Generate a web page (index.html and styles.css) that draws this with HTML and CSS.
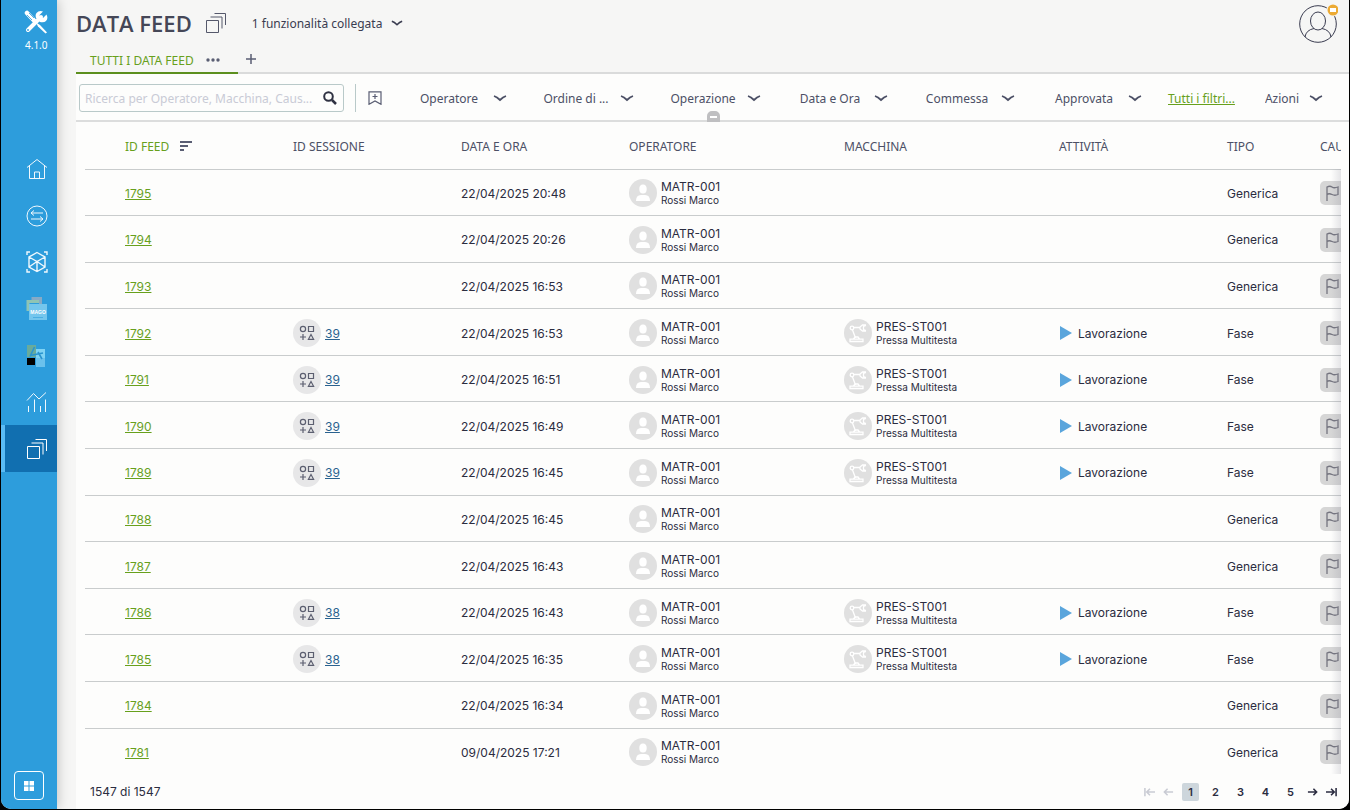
FILE: index.html
```
<!DOCTYPE html>
<html lang="it">
<head>
    <meta charset="UTF-8">
    <meta name="viewport" content="width=device-width, initial-scale=1.0">
    <title>Data Feed</title>
    <link rel="stylesheet" href="styles.css">
</head>
<body>
    <!-- Icone condivise -->
    <svg class="sprite" aria-hidden="true">
        <symbol id="chevron" viewBox="0 0 14 14"><path d="M1 5q3 1 6 4q3-3 6-4" fill="none" stroke="currentColor" stroke-width="1.800"/></symbol>
        <symbol id="stack" viewBox="0 0 22 22"><path d="M1.500 8.500h12v12h-12zM5.500 5h11.500V16.500M9.500 1.500h11V13" fill="none" stroke="currentColor"/></symbol>
        <symbol id="user" viewBox="0 0 28 28"><circle cx="14" cy="14" r="14" fill="#e0e0e0"/><ellipse cx="14" cy="10" rx="3.700" ry="4.500" fill="#fff"/><path d="M7 22q0-6 5-6h4q5 0 5 6z" fill="#fff"/></symbol>
        <symbol id="session" viewBox="0 0 28 28"><circle cx="14" cy="14" r="14" fill="#e7e7e8"/><g fill="none" stroke="#5c5f70" stroke-width="1.200"><circle cx="10" cy="10" r="2.600"/><path d="M15.500 7.500h5v5h-5zM7 18h6M10 15v6M18 15.500l2.600 4.800h-5.200z"/></g></symbol>
        <symbol id="robot" viewBox="0 0 28 28"><circle cx="14" cy="14" r="14" fill="#e0e0e0"/><g fill="none" stroke="#fff" stroke-width="1.300"><circle cx="8" cy="9" r="1.800"/><path d="M10 8.500h6M8.500 11l3 8M22 6h-3.500L16 8v2l2.500 2H22M22 6.500l-2.500 1v3l2.500 1"/><path d="M6 22.500v-2.300h13v2.300zM9.500 20l1.500-2h3l1.500 2"/></g></symbol>
        <symbol id="flag" viewBox="0 0 24 24"><path d="M7 20V6q3-1.500 5 0t6 0v7.500q-3 1.500-6 0t-5 0" fill="none" stroke="#74747f" stroke-width="1.300"/></symbol>
        <symbol id="arrow" viewBox="0 0 12 12"><path d="M1 6h9.500M7 2.500L10.500 6 7 9.500" fill="none" stroke="currentColor" stroke-width="1.700"/></symbol>
        <symbol id="arrow-end" viewBox="0 0 12 12"><path d="M0 6h9M5.500 2.500L9 6 5.500 9.500M11 1.500v9" fill="none" stroke="currentColor" stroke-width="1.700"/></symbol>
    </svg>

    <div class="app">
        <aside class="sidebar">
            <div class="brand">
                <svg width="24" height="24" viewBox="0 0 24 24">
                    <path d="M4 20L17 7" stroke="#fff" stroke-width="4" stroke-linecap="round"/>
                    <path d="M22.500 4.500L19 8l-3-.5L15.500 5 19 1.500q-4-1.500-6.500 1.500-1.500 2-.5 5l4 4q4 1 6-1 2.500-2.500.5-6.500z" fill="#fff"/>
                    <path d="M3 3l7.500 8" stroke="#fff" stroke-width="4.500" stroke-linecap="round"/>
                    <path d="M3 5l5 5M5 3l5 5" stroke="#2d9ddc" stroke-width="0.800"/>
                    <path d="M12 12.500l4 2.500 7 7.500-1.500 1-7.500-7z" fill="#fff"/>
                    <circle cx="4" cy="20" r="0.900" fill="#2d9ddc"/>
                </svg>
                <span>4.1.0</span>
            </div>
            <nav class="menu">
                <a href="#" aria-label="Home">
                    <svg width="22" height="22" viewBox="0 0 22 22"><path d="M1 9.500L11 1.500l10 8M3.500 8v12.500h15V8M8.500 20.500V14h5v6.500"/></svg>
                </a>
                <a href="#" aria-label="Movimenti">
                    <svg width="22" height="22" viewBox="0 0 22 22"><circle cx="11" cy="11" r="10"/><path d="M17 8H5M8 5.500L5 8l3 2.500M5 14h12M14 11.500l3 2.500-3 2.500"/></svg>
                </a>
                <a href="#" aria-label="Articoli">
                    <svg width="22" height="22" viewBox="0 0 22 22" stroke-width="1.400"><path d="M1 4V1h3M18 1h3v3M21 18v3h-3M4 21H1v-3M11 1.500l8 4.500v10l-8 4.500L3 16V6zM3 6l8 4.500L19 6M11 10.500v10M3 16l8-5.500 8 5.500"/></svg>
                </a>
                <a href="#" aria-label="Mago">
                    <svg width="22" height="24" viewBox="0 0 22 24">
                        <path d="M7 4V1.500h7.500V7" stroke="#86aac6" stroke-width="3"/>
                        <path d="M2 14V4.500h11" stroke="#8fc4b4" stroke-width="3"/>
                        <rect x="3" y="7" width="18" height="16" fill="#74c6ed" stroke="none"/>
                        <text x="12" y="17" text-anchor="middle" class="mago">MAGO</text>
                        <path d="M7 20.500h10" stroke="#4aaee2"/>
                    </svg>
                </a>
                <a href="#" aria-label="Analisi">
                    <svg width="22" height="24" viewBox="0 0 22 24" stroke="none">
                        <path d="M1 1h9v12H1z" fill="#69ab9c"/><path d="M10 5h9v9h-9z" fill="#7fd3f4"/><path d="M10 14h9v9h-9z" fill="#6bc1ec"/><path d="M1 14h8v7H1z" fill="#000"/>
                        <path d="M8.500 3L4 12.500M4 11.500l13-2.500M12 8l4 7" fill="none" stroke="#2a94cf" stroke-width="1.600"/>
                    </svg>
                </a>
                <a href="#" aria-label="Statistiche">
                    <svg width="22" height="22" viewBox="0 0 22 22"><path d="M1 9.500l6.500-7L13 8l7-6.500M2.500 21v-6M8.500 21V8.500M14.500 21v-6M19.500 21V8.500"/></svg>
                </a>
                <a href="#" class="active" aria-label="Data feed" aria-current="page">
                    <svg width="22" height="22"><use href="#stack"/></svg>
                </a>
            </nav>
            <button class="apps" aria-label="Applicazioni">
                <svg width="10" height="10" viewBox="0 0 10 10"><path d="M0 0h4.500v4.500H0zM5.500 0H10v4.500H5.500zM0 5.500h4.500V10H0zM5.500 5.500H10V10H5.500z" fill="#fff"/></svg>
            </button>
        </aside>

        <main>
            <header>
                <h1>DATA FEED</h1>
                <svg class="title-icon" width="22" height="22"><use href="#stack"/></svg>
                <div class="dropdown linked">
                    <select aria-label="Funzionalità collegate"><option>1 funzionalità collegata</option></select>
                    <svg width="12" height="12"><use href="#chevron"/></svg>
                </div>
                <button class="profile" aria-label="Profilo">
                    <svg width="40" height="40" viewBox="0 0 40 40">
                        <g fill="none" stroke="#3a3c50"><circle cx="20" cy="21" r="18.300"/><ellipse cx="20" cy="18" rx="7.500" ry="9"/><path d="M7 34q1-7 9-8.500M24 25.500q8 1.500 9 8.500"/></g>
                        <circle cx="35" cy="7" r="6.500" fill="#f6f6f6"/><circle cx="35" cy="7" r="5.500" fill="#ecaa33"/>
                        <rect x="32" y="5" width="6" height="4" fill="#fff"/>
                    </svg>
                </button>
            </header>

            <div class="tabs">
                <button class="tab">TUTTI I DATA FEED
                    <svg width="14" height="4" viewBox="0 0 14 4" fill="#5a5e73"><circle cx="2" cy="2" r="1.700"/><circle cx="7" cy="2" r="1.700"/><circle cx="12" cy="2" r="1.700"/></svg>
                </button>
                <button class="add-tab" aria-label="Aggiungi scheda">
                    <svg width="10" height="10" viewBox="0 0 10 10"><path d="M5 0v10M0 5h10" stroke="#5a5e73" stroke-width="1.500"/></svg>
                </button>
            </div>

            <div class="toolbar">
                <div class="search">
                    <input type="text" aria-label="Ricerca" placeholder="Ricerca per Operatore, Macchina, Caus...">
                    <svg width="14" height="14" viewBox="0 0 14 14"><circle cx="5.500" cy="5.500" r="4.300" fill="none" stroke="#2f3142" stroke-width="2"/><path d="M9 9l4 4" stroke="#2f3142" stroke-width="2.500"/></svg>
                </div>
                <button class="bookmark" aria-label="Salva ricerca">
                    <svg width="14" height="14" viewBox="0 0 14 14"><path d="M1 .8h12v12.500L7 10l-6 3.300zM7 3v5M4.500 5.500h5" fill="none" stroke="#5a5e73" stroke-width="1.200"/></svg>
                </button>
                <div class="filters" id="filters"></div>
                <a class="all-filters" href="#">Tutti i filtri...</a>
                <div class="dropdown actions">
                    <select aria-label="Azioni"><option>Azioni</option></select>
                    <svg width="14" height="14"><use href="#chevron"/></svg>
                </div>
                <button class="collapse" aria-label="Comprimi filtri"></button>
            </div>

            <div class="table-wrap">
                <table>
                    <colgroup>
                        <col class="c-feed"><col class="c-id"><col class="c-id"><col class="c-who"><col class="c-who"><col class="c-id"><col class="c-type"><col class="c-id">
                    </colgroup>
                    <thead>
                        <tr>
                            <th class="sorted">ID FEED
                                <svg width="12" height="10" viewBox="0 0 12 10"><path d="M0 1h12M0 5h8M0 9h4" stroke="#5a5e73" stroke-width="1.800"/></svg>
                            </th>
                            <th>ID SESSIONE</th>
                            <th>DATA E ORA</th>
                            <th>OPERATORE</th>
                            <th>MACCHINA</th>
                            <th>ATTIVITÀ</th>
                            <th>TIPO</th>
                            <th>CAUSALE</th>
                        </tr>
                    </thead>
                    <tbody id="rows"></tbody>
                </table>
            </div>

            <footer>
                <span>1547 di 1547</span>
                <nav class="pager" aria-label="Pagine">
                    <button class="prev" disabled aria-label="Prima pagina"><svg width="11" height="12"><use href="#arrow-end"/></svg></button>
                    <button class="prev" disabled aria-label="Pagina precedente"><svg width="11" height="12"><use href="#arrow"/></svg></button>
                    <button class="page current">1</button>
                    <button class="page">2</button>
                    <button class="page">3</button>
                    <button class="page">4</button>
                    <button class="page">5</button>
                    <button aria-label="Pagina successiva"><svg width="11" height="12"><use href="#arrow"/></svg></button>
                    <button aria-label="Ultima pagina"><svg width="11" height="12"><use href="#arrow-end"/></svg></button>
                </nav>
            </footer>
        </main>
    </div>

<script>
    const filters = ['Operatore', 'Ordine di ...', 'Operazione', 'Data e Ora', 'Commessa', 'Approvata'];

    // id, data e ora, sessione (solo per le fasi)
    const feeds = [
        [1795, '22/04/2025 20:48'],
        [1794, '22/04/2025 20:26'],
        [1793, '22/04/2025 16:53'],
        [1792, '22/04/2025 16:53', 39],
        [1791, '22/04/2025 16:51', 39],
        [1790, '22/04/2025 16:49', 39],
        [1789, '22/04/2025 16:45', 39],
        [1788, '22/04/2025 16:45'],
        [1787, '22/04/2025 16:43'],
        [1786, '22/04/2025 16:43', 38],
        [1785, '22/04/2025 16:35', 38],
        [1784, '22/04/2025 16:34'],
        [1781, '09/04/2025 17:21']
    ];

    function entity(icon, code, name) {
        return `<div class="entity">
            <svg width="28" height="28"><use href="#${icon}"/></svg>
            <div><strong>${code}</strong><small>${name}</small></div>
        </div>`;
    }

    document.getElementById('filters').innerHTML = filters.map(name => `
        <div class="dropdown filter">
            <select aria-label="${name}"><option>${name}</option></select>
            <svg width="14" height="14"><use href="#chevron"/></svg>
        </div>`).join('');

    document.getElementById('rows').innerHTML = feeds.map(([id, date, session]) => `
        <tr>
            <td><a class="feed" href="#">${id}</a></td>
            <td>${session ? `<div class="entity"><svg width="28" height="28"><use href="#session"/></svg><a class="session" href="#">${session}</a></div>` : ''}</td>
            <td>${date}</td>
            <td>${entity('user', 'MATR-001', 'Rossi Marco')}</td>
            <td>${session ? entity('robot', 'PRES-ST001', 'Pressa Multitesta') : ''}</td>
            <td>${session ? '<div class="activity"><span class="play"></span>Lavorazione</div>' : ''}</td>
            <td>${session ? 'Fase' : 'Generica'}</td>
            <td><button class="cause" aria-label="Causale"><svg width="24" height="24"><use href="#flag"/></svg></button></td>
        </tr>`).join('');
</script>
</body>
</html>
```
FILE: styles.css
```
* {
    margin: 0;
    padding: 0;
    box-sizing: border-box;
}
body {
    font-family: "Noto Sans", sans-serif;
    font-size: 12px;
    color: #4c5066;
    background-color: #000;
}
button, select, input {
    font: inherit;
    color: inherit;
    border: none;
    background: none;
}
button {
    cursor: pointer;
}
svg {
    display: block;
    flex: none;
}
.sprite {
    display: none;
}
.app {
    display: flex;
    height: calc(100vh - 1px);
    margin: 0 1px;
    background-color: #f6f6f5;
    border-radius: 0 0 10px 10px;
    overflow: hidden;
}

/* Barra laterale */
.sidebar {
    display: flex;
    flex-direction: column;
    width: 56px;
    background-color: #2d9ddc;
    color: #fff;
    box-shadow: 0 0 12px rgba(0, 0, 0, 0.25);
}
.brand {
    height: 146px;
    padding: 10px 0 0 23px;
    font-size: 10px;
}
.brand span {
    display: block;
    margin-top: 4px;
    margin-left: 1px;
    line-height: 14px;
}
.menu {
    display: flex;
    flex-direction: column;
    height: 326px;
}
.menu a {
    flex: 1;
    display: flex;
    align-items: center;
    padding-left: 25px;
    color: #fff;
    fill: none;
    stroke: #f0f8fd;
}
.menu .active {
    padding-left: 21px;
    border-left: 4px solid #5bbcf5;
    background-color: #116fb0;
}
.mago {
    font-family: "Liberation Sans", sans-serif;
    font-size: 5px;
    font-weight: bold;
    fill: #fff;
    stroke: none;
}
.apps {
    display: flex;
    align-items: center;
    justify-content: center;
    width: 30px;
    height: 29px;
    margin: auto 0 9px 13px;
    border: 1px solid #fff;
    border-radius: 4px;
}

/* Intestazione */
main {
    flex: 1;
    display: flex;
    flex-direction: column;
    min-width: 0;
    padding-left: 19px;
}
header {
    display: flex;
    align-items: center;
    height: 46px;
    padding-right: 11px;
}
h1 {
    font-family: "Open Sans", sans-serif;
    font-size: 22px;
    font-weight: 600;
    color: #454757;
}
.title-icon {
    margin: 0 25px 0 13px;
    color: #55586b;
}
.dropdown {
    display: flex;
    align-items: center;
}
.dropdown select {
    appearance: none;
    cursor: pointer;
}
.linked {
    gap: 8px;
    color: #3a3c50;
}
.profile {
    margin-left: auto;
}

/* Schede */
.tabs {
    display: flex;
    height: 28px;
    border-bottom: 2px solid #dadbdb;
}
.tab {
    display: flex;
    align-items: center;
    gap: 12px;
    width: 162px;
    height: 28px;
    padding-top: 2px;
    padding-left: 14px;
    border-bottom: 2px solid #5c8f1e;
    color: #67a01c;
}
.add-tab {
    height: 26px;
    padding: 0 8px;
}

/* Filtri */
.toolbar {
    position: relative;
    display: flex;
    align-items: center;
    height: 48px;
    padding-top: 2px;
    padding-left: 3px;
    background-color: #fdfdfc;
    border-bottom: 2px solid #dcdddd;
}
.search {
    display: flex;
    align-items: center;
    width: 265px;
    height: 28px;
    padding: 0 6px 0 5px;
    border: 1px solid #b9c9c9;
    border-radius: 3px;
}
.search input {
    flex: 1;
    min-width: 0;
    outline: none;
}
.search input::placeholder {
    color: #c9cbd6;
}
.bookmark {
    margin-left: 11px;
    padding: 7px 0 7px 12px;
    border-left: 1px solid #b9c9c9;
}
.filters {
    display: flex;
    gap: 27px;
    margin-left: 25px;
}
.filter {
    gap: 2px;
}
.filter select {
    width: 84px;
    text-align: center;
    text-align-last: center;
}
.all-filters {
    margin-left: 26px;
    color: #67a01c;
}
.actions {
    gap: 9px;
    margin-left: 30px;
}
.collapse {
    position: absolute;
    left: 631px;
    bottom: -2px;
    width: 13px;
    height: 11px;
    border: 3px solid #bfbfc1;
    border-top-width: 5px;
    border-bottom-width: 4px;
    border-radius: 5px 5px 0 0;
    background-color: #fff;
}

/* Tabella */
.table-wrap {
    position: relative;
    flex: 1;
    min-height: 0;
    padding: 0 8px 0 9px;
    background-color: #fdfdfc;
    overflow: hidden;
}
/* sfumatura sul bordo destro */
.table-wrap::after {
    content: "";
    position: absolute;
    top: 47px;
    right: 0;
    bottom: 0;
    width: 18px;
    background: linear-gradient(to right, rgba(130, 130, 145, 0), rgba(130, 130, 145, 0.2) 10px, #fdfdfc 10px);
}
.table-wrap::before {
    content: "";
    position: absolute;
    top: 0;
    right: 0;
    width: 8px;
    height: 48px;
    background-color: #fdfdfc;
}
table {
    width: 100%;
    min-width: 1403px;
    height: 100%;
    table-layout: fixed;
    border-collapse: collapse;
}
.c-feed {
    width: 208px;
}
.c-id {
    width: 168px;
}
.c-who {
    width: 215px;
}
.c-type {
    width: 93px;
}
th, td {
    padding-top: 2px;
    text-align: left;
    white-space: nowrap;
}
th:first-child, td:first-child {
    padding-left: 40px;
}
th {
    height: 47px;
    font-weight: normal;
}
tbody tr {
    border-top: 1px solid #c9cccd;
}
td {
    font-family: Inter, sans-serif;
    font-size: 12px;
    color: #2b2c40;
}
.sorted {
    color: #67a01c;
}
.sorted svg {
    display: inline-block;
    margin-left: 8px;
}
.feed {
    color: #67a01c;
}
.session {
    color: #2a628f;
}
.entity {
    display: flex;
    align-items: center;
    gap: 4px;
}
.entity strong, .entity small {
    display: block;
    font-weight: normal;
}
.entity strong {
    line-height: 14px;
}
.entity small {
    font-size: 10px;
    line-height: 12px;
}
.activity {
    display: flex;
    align-items: center;
    gap: 6px;
    padding-left: 1px;
}
.play {
    border-left: 12px solid #5aa5dc;
    border-top: 7px solid transparent;
    border-bottom: 7px solid transparent;
}
.cause {
    display: block;
    width: 40px;
    height: 24px;
    border-radius: 5px;
    background-color: #d6d6d6;
}

/* Paginazione */
footer {
    display: flex;
    align-items: center;
    justify-content: space-between;
    height: 35px;
    padding: 0 12px 0 14px;
    background-color: #fdfdfc;
    font-family: Inter, sans-serif;
    color: #2b2c40;
}
.pager {
    display: flex;
    align-items: center;
    gap: 8px;
}
.page {
    width: 17px;
    height: 18px;
    font-size: 11px;
    font-weight: 600;
}
.current {
    border-radius: 2px;
    background-color: #cdd6dc;
}
.prev {
    color: #c9cbd3;
    transform: rotate(180deg);
}
```
